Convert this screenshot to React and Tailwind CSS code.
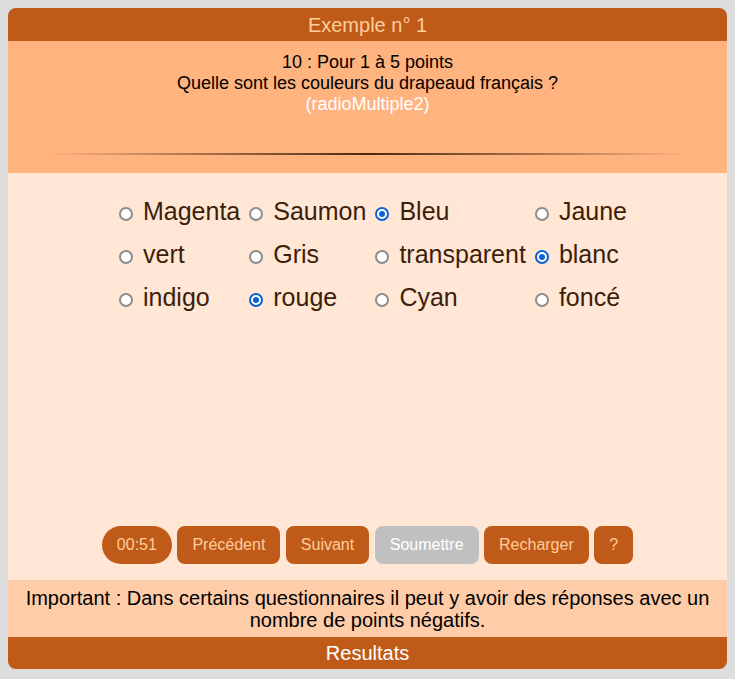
const options = [
  ["Magenta", false],
  ["Saumon", false],
  ["Bleu", true],
  ["Jaune", false],
  ["vert", false],
  ["Gris", false],
  ["transparent", false],
  ["blanc", true],
  ["indigo", false],
  ["rouge", true],
  ["Cyan", false],
  ["foncé", false],
];

function Btn({ children, gray, pill }) {
  return (
    <button
      type="button"
      className={
        "h-[38px] px-[15px] text-[16px] " +
        (pill ? "rounded-full " : "rounded-[8px] ") +
        (gray ? "bg-[#c0c0c0] text-white" : "bg-[#c05a18] text-[#ffcd9a]")
      }
    >
      {children}
    </button>
  );
}

function Radio({ checked }) {
  return checked ? (
    <span className="ml-[5px] mr-[10px] mt-[4px] w-[14px] h-[14px] rounded-full border-[2px] border-[#0b63d8] bg-white flex items-center justify-center">
      <span className="w-[6px] h-[6px] rounded-full bg-[#0b63d8]" />
    </span>
  ) : (
    <span className="ml-[5px] mr-[10px] mt-[4px] w-[14px] h-[14px] rounded-full border-[2px] border-[#8d8d8d] bg-white" />
  );
}

export default function App() {
  return (
    <div className="min-h-[679px] bg-[#dddddd] p-2 font-['Liberation_Sans',Arial,sans-serif]">
      <div className="rounded-[8px] overflow-hidden">
        {/* header */}
        <div className="h-[33px] bg-[#c05a18] flex items-center justify-center text-[20px] text-[#ffcd9a]">
          Exemple n° 1
        </div>

        {/* question */}
        <div className="bg-[#ffb37f] pt-[11px] pb-[18px] text-center text-[18px] leading-[21px] text-black">
          <div>10 : Pour 1 à 5 points</div>
          <div>Quelle sont les couleurs du drapeaud français ?</div>
          <div className="text-white">(radioMultiple2)</div>
          <div className="mt-[38px] mx-10 h-[2px] bg-gradient-to-r from-transparent via-[#4a2810] to-transparent" />
        </div>

        {/* answers */}
        <div className="bg-[#ffe6d5] h-[407px] flex flex-col">
          <div className="pt-[17px] pl-[6px] flex justify-center">
            <div className="grid grid-cols-[auto_auto_auto_auto] gap-x-[4px]">
              {options.map(([label, checked]) => (
                <div key={label} className="h-[43px] flex items-center text-[25px] text-[#3d1e08]">
                  <Radio checked={checked} />
                  {label}
                </div>
              ))}
            </div>
          </div>
          <div className="mt-auto pb-[16px] flex justify-center gap-[5.5px]">
            <Btn pill>00:51</Btn>
            <Btn>Précédent</Btn>
            <Btn>Suivant</Btn>
            <Btn gray>Soumettre</Btn>
            <Btn>Recharger</Btn>
            <Btn>?</Btn>
          </div>
        </div>

        {/* notice */}
        <div className="bg-[#ffcca8] h-[57px] px-[16px] flex items-center justify-center text-center text-[20px] leading-[22px] text-black">
          Important : Dans certains questionnaires il peut y avoir des réponses avec un nombre de points négatifs.
        </div>

        {/* footer */}
        <div className="h-[32px] bg-[#c05a18] flex items-center justify-center text-[20px] text-white">
          Resultats
        </div>
      </div>
    </div>
  );
}
